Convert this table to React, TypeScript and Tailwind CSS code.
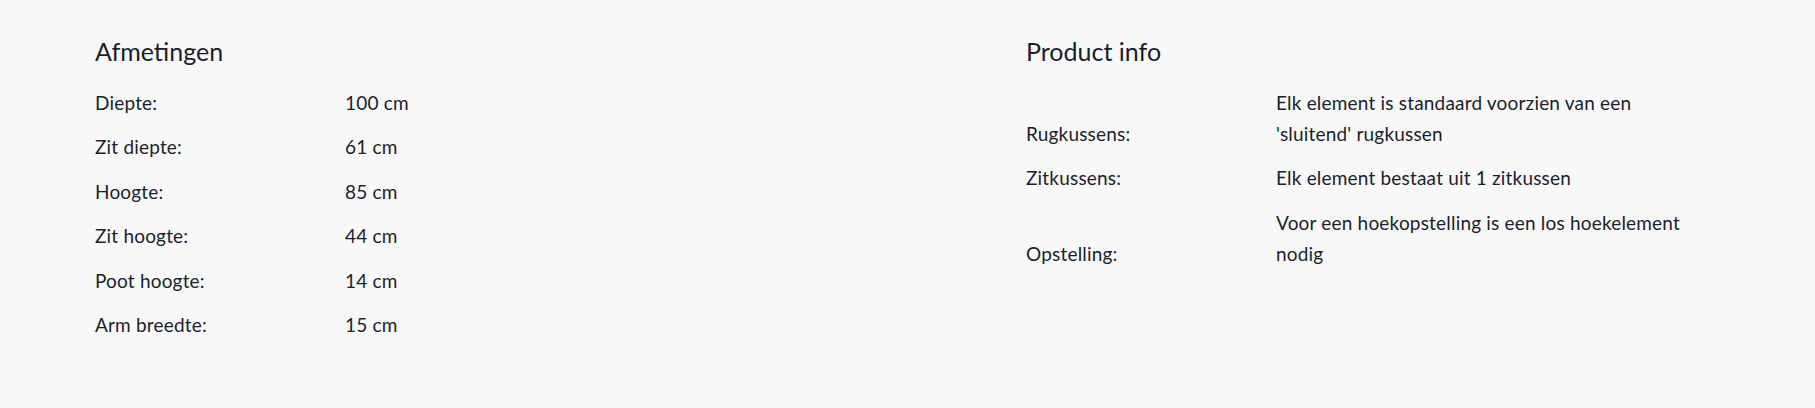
import React from 'react'

const AFMETINGEN = [
  { label: 'Diepte:', value: '100 cm' },
  { label: 'Zit diepte:', value: '61 cm' },
  { label: 'Hoogte:', value: '85 cm' },
  { label: 'Zit hoogte:', value: '44 cm' },
  { label: 'Poot hoogte:', value: '14 cm' },
  { label: 'Arm breedte:', value: '15 cm' },
]

const PRODUCT_INFO = [
  { label: 'Rugkussens:', value: "Elk element is standaard voorzien van een 'sluitend' rugkussen" },
  { label: 'Zitkussens:', value: 'Elk element bestaat uit 1 zitkussen' },
  { label: 'Opstelling:', value: 'Voor een hoekopstelling is een los hoekelement nodig' },
]

function Spec({ title, rows }: { title: string; rows: { label: string; value: string }[] }) {
  return (
    <div>
      <h3 className="text-[25px] leading-[30px] font-normal mb-[14px]">{title}</h3>
      <div>
        {rows.map(r => (
          <div key={r.label} className="flex items-end py-[6.75px] text-[19px] leading-[31px] tracking-[0.01em]">
            <span className="w-[250px] shrink-0">{r.label}</span>
            <span className="w-[434px]">{r.value}</span>
          </div>
        ))}
      </div>
    </div>
  )
}

export default function App() {
  return (
    <div
      className="min-h-screen bg-[#f8f8f8] text-[#1b1e2c] pt-[36px] pl-[95px]"
      style={{ fontFamily: 'Lato, "Noto Sans", sans-serif' }}
    >
      <div className="grid grid-cols-[931px_1fr]">
        <Spec title="Afmetingen" rows={AFMETINGEN} />
        <Spec title="Product info" rows={PRODUCT_INFO} />
      </div>
    </div>
  )
}
